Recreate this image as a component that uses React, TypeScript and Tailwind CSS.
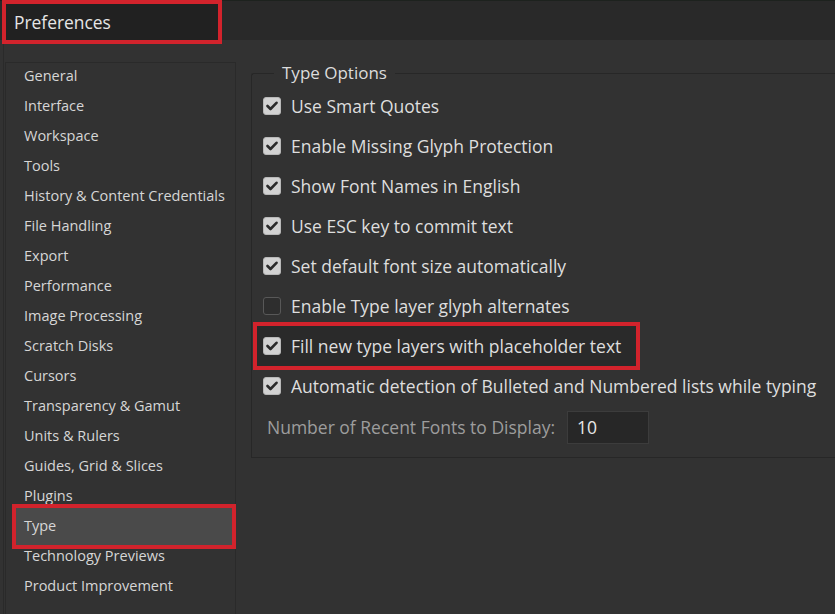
import React from 'react';

const NAV_ITEMS = [
    'General',
    'Interface',
    'Workspace',
    'Tools',
    'History & Content Credentials',
    'File Handling',
    'Export',
    'Performance',
    'Image Processing',
    'Scratch Disks',
    'Cursors',
    'Transparency & Gamut',
    'Units & Rulers',
    'Guides, Grid & Slices',
    'Plugins',
    'Type',
    'Technology Previews',
    'Product Improvement',
];

const OPTIONS = [
    { label: 'Use Smart Quotes', checked: true },
    { label: 'Enable Missing Glyph Protection', checked: true },
    { label: 'Show Font Names in English', checked: true },
    { label: 'Use ESC key to commit text', checked: true },
    { label: 'Set default font size automatically', checked: true },
    { label: 'Enable Type layer glyph alternates', checked: false },
    { label: 'Fill new type layers with placeholder text', checked: true, marked: true },
    { label: 'Automatic detection of Bulleted and Numbered lists while typing', checked: true },
];

const Checkbox: React.FC<{ checked: boolean }> = ({ checked }) =>
    checked ? (
        <span className="w-[18px] h-[18px] shrink-0 rounded-[3px] bg-[#d2d2d2] border border-[#b8b8b8] flex items-center justify-center">
            <svg width="12" height="10" viewBox="0 0 12 10">
                <polyline points="1.5,5 4.5,8 10.5,1.8" fill="none" stroke="#2b2b2b" strokeWidth="2.6" strokeLinecap="round" strokeLinejoin="round" />
            </svg>
        </span>
    ) : (
        <span className="w-[18px] h-[18px] shrink-0 rounded-[3px] bg-[#2e2e2e] border border-[#585858]" />
    );

export default function App() {
    return (
        <div className="w-[835px] h-[614px] overflow-hidden bg-[#323232] text-[#d6d6d6] font-['Open_Sans',sans-serif] flex flex-col">
            {/* Title bar */}
            <div className="h-[40px] shrink-0 bg-[#292929] border-t border-[#1d221e] flex items-start">
                <div className="relative z-10 -mt-px ml-[2px] w-[220px] h-[44px] border-4 border-[#d2232c] bg-[#212121] flex items-center pl-[8px] text-[17.4px] text-[#e6e6e6]">
                    Preferences
                </div>
            </div>

            <div className="flex-1 flex min-h-0 border-l border-[#2a2a2a] ml-[3px]">
                {/* Sidebar */}
                <aside className="w-[231px] shrink-0 mt-[22px] ml-[1px] border-t border-l border-r border-[#2a2a2a]">
                    <nav className="flex flex-col -mt-[2px]">
                        {NAV_ITEMS.map((item) => (
                            <div key={item} className="relative h-[30px] flex items-center pl-[18px] text-[14.5px]">
                                {item === 'Type' && (
                                    <div className="absolute left-[10px] right-[3px] -top-[3px] -bottom-[4px] bg-[#4a4a4a] outline-4 outline-[#d2232c] shadow-[0_1px_2px_rgba(0,0,0,0.4)]" />
                                )}
                                <span className="relative">{item}</span>
                            </div>
                        ))}
                    </nav>
                </aside>

                {/* Type options */}
                <main className="flex-1 min-w-0 pl-[15px] pt-[21px]">
                    <fieldset className="w-[620px] border border-r-0 border-[#272727] rounded-tl-[3px] pb-[13px]">
                        <legend className="ml-[22px] px-[8px] text-[17px] leading-[24px] text-[#dcdcdc]">Type Options</legend>
                        <div className="flex flex-col pt-[1px]">
                            {OPTIONS.map((opt) => (
                                <div
                                    key={opt.label}
                                    className={`h-[40px] flex items-center gap-[10px] text-[17.5px] text-[#dedede] ${opt.marked ? 'relative z-10 w-[379px] ml-[5px] pl-[6px] outline-4 outline-[#d2232c] bg-[#2a2a2a]' : 'pl-[11px]'}`}
                                >
                                    <Checkbox checked={opt.checked} />
                                    <span className="whitespace-nowrap">{opt.label}</span>
                                </div>
                            ))}
                            <div className="mt-[5px] flex items-center pl-[15px] gap-[12px] text-[17.5px]">
                                <span className="text-[#9d9d9d]">Number of Recent Fonts to Display:</span>
                                <div className="w-[82px] h-[33px] bg-[#272727] border border-[#3c3c3c] flex items-center pl-[9px] text-[#e8e8e8]">
                                    10
                                </div>
                            </div>
                        </div>
                    </fieldset>
                </main>
            </div>
        </div>
    );
}
